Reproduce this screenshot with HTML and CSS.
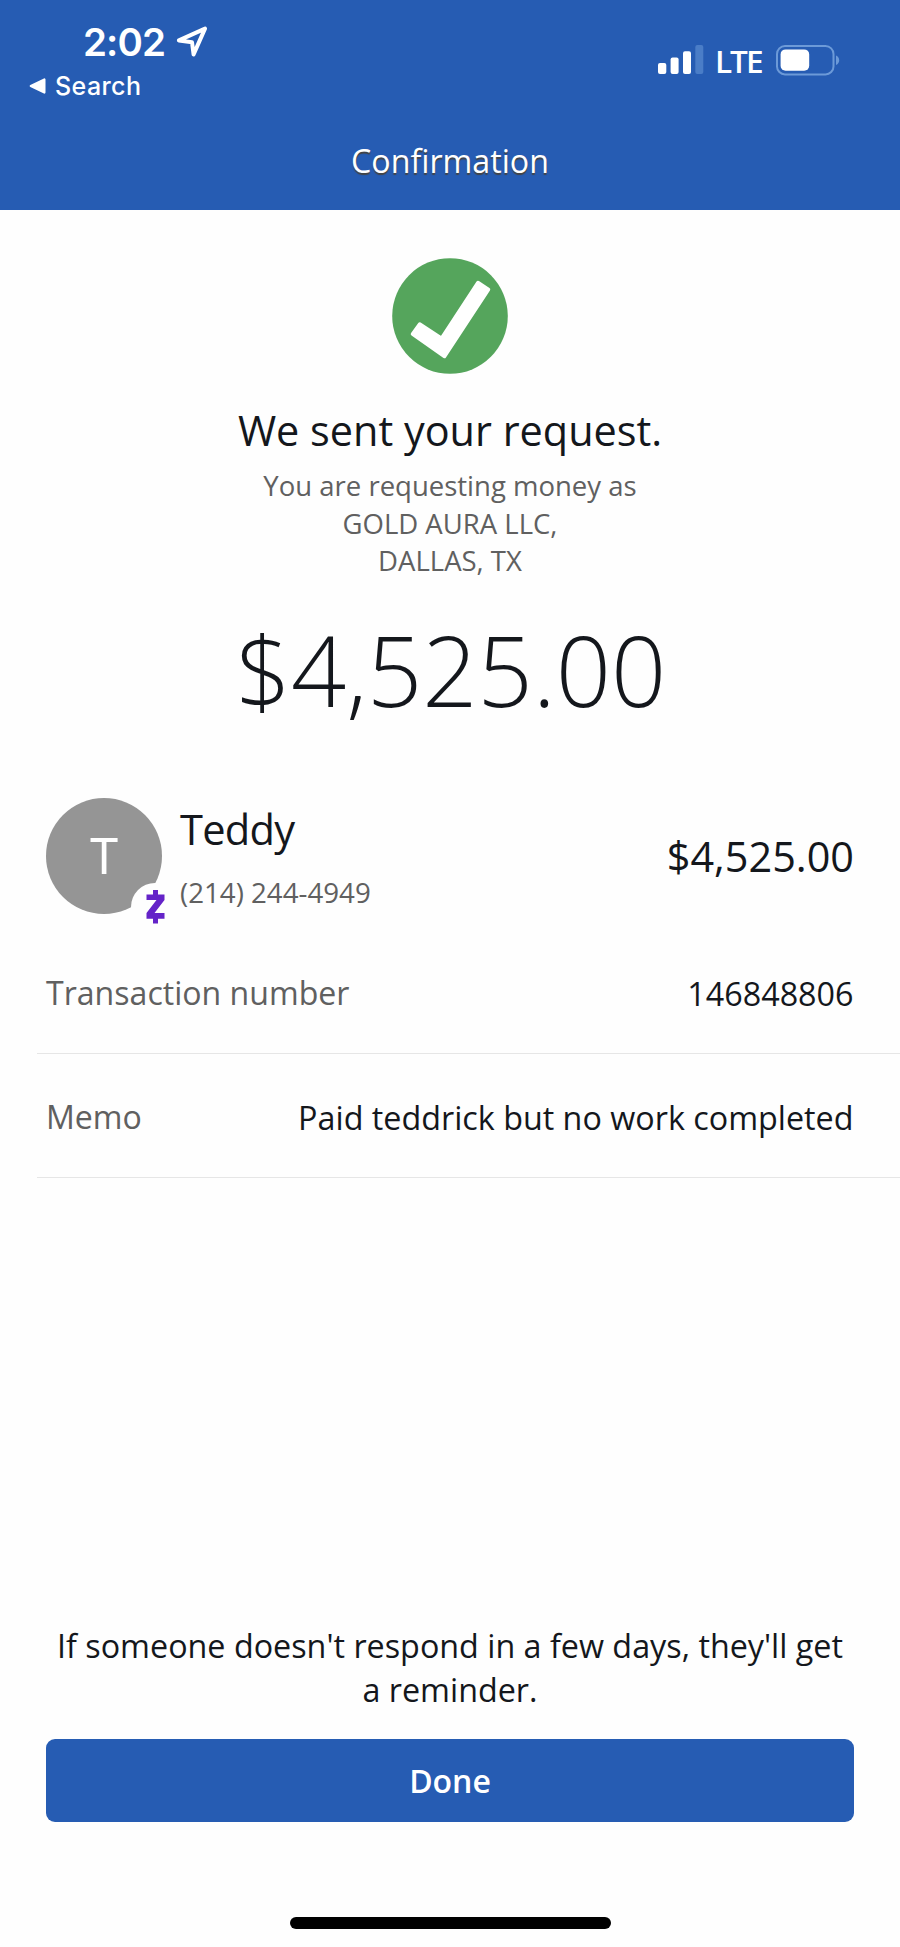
FILE: index.html
```html
<!DOCTYPE html>
<html lang="en">
<head>
    <meta charset="UTF-8">
    <meta name="viewport" content="width=device-width, initial-scale=1.0">
    <title>Confirmation</title>
    <link rel="stylesheet" href="styles.css">
</head>
<body>
    <header class="header">
        <div class="status-bar">
            <div class="status-left">
                <div class="clock">
                    <span class="time">2:02</span>
                    <svg class="location" width="32" height="32" viewBox="0 0 32 32">
                        <path d="M2.9 14.4 L29 2.6 L17.6 28.4 L16 16.2 Z" fill="none" stroke="#fff" stroke-width="4" stroke-linejoin="round"/>
                    </svg>
                </div>
                <div class="back">
                    <svg width="17" height="16" viewBox="0 0 17 16">
                        <path d="M1.8 8 L15.4 1.4 V14.6 Z" fill="#fff" stroke="#fff" stroke-width="2.2" stroke-linejoin="round"/>
                    </svg>
                    <span>Search</span>
                </div>
            </div>
            <div class="status-right">
                <svg width="46" height="30" viewBox="0 0 46 30">
                    <rect x="0" y="18" width="8.3" height="11" rx="2" fill="#fff"/>
                    <rect x="12.6" y="12.5" width="8" height="16.5" rx="2" fill="#fff"/>
                    <rect x="25" y="6.3" width="8" height="22.7" rx="2" fill="#fff"/>
                    <rect x="37.3" y="0" width="8" height="29" rx="2" fill="#4a7dc7"/>
                </svg>
                <span class="network">LTE</span>
                <svg class="battery" width="64" height="32" viewBox="0 0 64 32">
                    <rect x="1" y="1" width="56.5" height="28.4" rx="8" fill="none" stroke="#6c9ad8" stroke-width="2"/>
                    <rect x="4.6" y="4.4" width="28.6" height="21.4" rx="5" fill="#fff"/>
                    <path d="M60 10.5 Q63.2 12 63.2 15.2 Q63.2 18.4 60 20 Z" fill="#6c9ad8"/>
                </svg>
            </div>
        </div>
        <h1 class="title">Confirmation</h1>
    </header>

    <main class="content">
        <svg class="check" width="116" height="116" viewBox="0 0 116 116">
            <circle cx="58" cy="58" r="57.8" fill="#55a55c"/>
            <path d="M27.7 66 L49 80 Q50 79.5 51 78 L86 24.5 L96.5 31.5 L52.5 98.5 L20.5 76 Z" fill="#fff" stroke="#fff" stroke-width="3.5" stroke-linejoin="round"/>
        </svg>
        <h2 class="heading">We sent your request.</h2>
        <p class="sender">You are requesting money as<br>GOLD AURA LLC,<br>DALLAS, TX</p>
        <p class="total">$4,525.00</p>

        <div class="contact">
            <div class="avatar">
                T
                <span class="badge">
                    <svg width="19" height="34" viewBox="0 0 19 34">
                        <path d="M7 0 H12 V4.5 H18.5 V10 L8.5 23 H18.5 V28.8 H12 V33.5 H7 V28.8 H0.5 V23 L10.5 10 H0.5 V4.5 H7 Z" fill="#6423c8"/>
                    </svg>
                </span>
            </div>
            <div class="contact-info">
                <p class="name">Teddy</p>
                <p class="phone">(214) 244-4949</p>
            </div>
            <p class="amount">$4,525.00</p>
        </div>

        <div class="row">
            <span class="label">Transaction number</span>
            <span>146848806</span>
        </div>
        <div class="row">
            <span class="label">Memo</span>
            <span>Paid teddrick but no work completed</span>
        </div>
    </main>

    <footer class="footer">
        <p class="reminder">If someone doesn't respond in a few days, they'll get a reminder.</p>
        <button type="button" class="done">Done</button>
        <div class="home-bar"></div>
    </footer>
</body>
</html>
```
FILE: styles.css
```css
* {
    box-sizing: border-box;
}

body {
    display: flex;
    flex-direction: column;
    height: 1947px;
    margin: 0;
    background-color: #fefefe;
    color: #14171c;
    font-family: "Open Sans", sans-serif;
    font-size: 32.3px;
}

h1, h2, p {
    margin: 0;
    font-weight: 400;
}

svg {
    display: block;
    flex: none;
}

/* Header */
.header {
    height: 210px;
    background-color: #265cb3;
    color: #fff;
}

.status-bar {
    display: flex;
    justify-content: space-between;
    height: 111px;
    padding: 20px 60px 0 29px;
    font-family: Inter, sans-serif;
}

.clock {
    display: flex;
    gap: 11px;
    height: 44px;
    padding-left: 54px;
}

.time {
    font-size: 38.5px;
    font-weight: 600;
    letter-spacing: -0.9px;
    line-height: 44px;
}

.location {
    margin-top: 6px;
}

.back {
    display: flex;
    align-items: center;
    gap: 9px;
    margin-top: 7px;
    font-size: 25px;
    font-weight: 500;
    letter-spacing: 0.4px;
    line-height: 30px;
}

.status-right {
    display: flex;
    height: 30px;
    margin-top: 25px;
}

.network {
    width: 48px;
    margin-left: 11px;
    font-family: "Open Sans", sans-serif;
    font-size: 31.5px;
    font-weight: 600;
    letter-spacing: -2px;
    line-height: 31px;
    white-space: nowrap;
}

.battery {
    margin-left: 13px;
}

.title {
    font-size: 32.2px;
    line-height: 100px;
    text-align: center;
    text-shadow: 0 2px 1px #444;
}

/* Request summary */
.check {
    margin: 48px auto 0;
}

.heading {
    margin-top: 28px;
    font-size: 41.4px;
    line-height: 56px;
    text-align: center;
}

.sender {
    margin-top: 9px;
    color: #606060;
    font-size: 27.5px;
    line-height: 37.6px;
    text-align: center;
}

.total {
    margin-top: 30px;
    padding-left: 2px;
    font-size: 96.8px;
    font-weight: 300;
    line-height: 120px;
    text-align: center;
}

.contact {
    display: flex;
    align-items: center;
    margin-top: 68px;
    padding: 0 46px;
}

.avatar {
    position: relative;
    flex: none;
    width: 116px;
    height: 116px;
    border-radius: 50%;
    background-color: #959595;
    color: #fff;
    font-family: Inter, sans-serif;
    font-size: 49px;
    line-height: 118px;
    text-align: center;
}

.badge {
    position: absolute;
    top: 85px;
    left: 85px;
    display: flex;
    align-items: center;
    justify-content: center;
    width: 48px;
    height: 48px;
    border-radius: 50%;
    background-color: #fefefe;
}

.contact-info {
    flex: 1;
    margin-left: 18px;
    padding-top: 2px;
}

.name {
    font-size: 41.6px;
    letter-spacing: -0.7px;
    line-height: 50px;
}

.phone {
    margin-top: 20px;
    color: #606060;
    font-size: 27.7px;
    line-height: 36px;
}

.amount {
    font-size: 41.4px;
}

.row {
    display: flex;
    align-items: center;
    justify-content: space-between;
    height: 124px;
    margin-left: 37px;
    padding: 3px 46.5px 0 9px;
    border-bottom: 1px solid #e6e6e6;
}

.contact + .row {
    margin-top: 16px;
}

.label {
    color: #606060;
    font-size: 32.1px;
}

/* Footer */
.footer {
    margin-top: auto;
    padding: 0 46px 18px;
}

.reminder {
    line-height: 43.8px;
    text-align: center;
}

.done {
    display: block;
    width: 100%;
    height: 83px;
    margin-top: 27px;
    padding: 0;
    border: none;
    border-radius: 9px;
    background-color: #265cb3;
    color: #fff;
    font-family: inherit;
    font-size: 32px;
    font-weight: 600;
    cursor: pointer;
}

.home-bar {
    width: 321px;
    height: 12px;
    margin: 95px auto 0;
    border-radius: 6px;
    background-color: #000;
}
```
